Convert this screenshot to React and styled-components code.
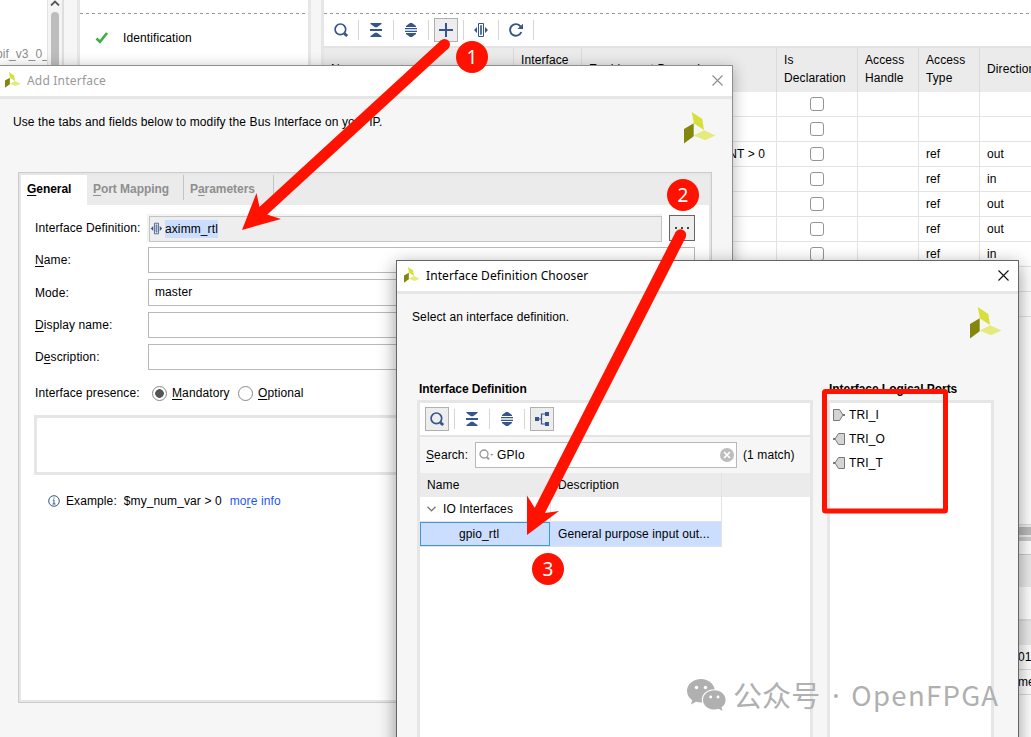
import React from "react";
import styled, { createGlobalStyle } from "styled-components";

const COLORS = {
  icon: "#36558c",
  panel: "#f6f6f6",
  header: "#ebebeb",
  line: "#e3e3e3",
  frame: "#e6e6e6",
  field: "#b9b9b9",
  selected: "#ccdeff",
  link: "#1c56f2",
  red: "#ff1200",
};

const ports = [
  { type: "", dir: "" },
  { type: "", dir: "" },
  { enable: "NT > 0", type: "ref", dir: "out" },
  { type: "ref", dir: "in" },
  { type: "ref", dir: "out" },
  { type: "ref", dir: "out" },
  { type: "ref", dir: "in" },
  { type: "ref", dir: "in" },
  { type: "ref", dir: "in" },
];

const SearchIcon = () => (
  <svg width="16" height="16" viewBox="0 0 16 16" fill="none" stroke={COLORS.icon}>
    <circle cx="7.4" cy="7.3" r="5.3" strokeWidth="1.7" />
    <path d="M11.4 11.6 14.2 14" strokeWidth="2.8" />
  </svg>
);

const CollapseIcon = () => (
  <svg width="16" height="16" viewBox="0 0 16 16" fill={COLORS.icon}>
    <path d="M2.5 1h11v1L9 5.200H7L2.500 2zM2 7h12v2H2zM2.500 15h11v-1L9 10.800H7L2.500 14z" />
  </svg>
);

const ExpandIcon = () => (
  <svg width="16" height="16" viewBox="0 0 16 16" fill={COLORS.icon}>
    <path d="M3 5V4l4-3h2l4 3v1zM2 6h12v1.300H2zM2 8.700h12V10H2zM3 11v1l4 3h2l4-3v-1z" />
  </svg>
);

const PlusIcon = () => (
  <svg width="16" height="16" viewBox="0 0 16 16" fill={COLORS.icon}>
    <path d="M7 1h2v6h6v2H9v6H7V9H1V7h6z" />
  </svg>
);

const BusIcon = ({ size = 16 }) => (
  <svg width={size} height={size} viewBox="0 0 16 16" fill="none" stroke={COLORS.icon}>
    <path d="M5.500 1.500h5v13h-5z" />
    <path d="M7.500 3.500h1v9h-1z" strokeWidth=".8" fill="#c4cede" />
    <path d="M4 5v6L1 8zM12 5v6l3-3z" stroke="none" fill={COLORS.icon} />
  </svg>
);

const RefreshIcon = () => (
  <svg width="16" height="16" viewBox="0 0 16 16" fill="none" stroke={COLORS.icon}>
    <path d="M12.600 4.600A5.800 5.800 0 1 0 13.300 10" strokeWidth="1.900" />
    <path d="M15 1.800V7H9.500z" stroke="none" fill={COLORS.icon} />
  </svg>
);

const TreeIcon = () => (
  <svg width="16" height="16" viewBox="0 0 16 16" fill={COLORS.icon}>
    <path d="M1 6h4v4H1zM11 1h4v4h-4zM11 11h4v4h-4z" />
    <path d="M5 8h2.500M11 3H7.500v10H11" fill="none" stroke={COLORS.icon} strokeWidth="1.200" />
  </svg>
);

const Logo = ({ size = 32 }) => (
  <svg width={size} height={size} viewBox="0 0 32 32">
    <path d="M7.700 0 18.300 7 20 18 10 11.600z" fill="#d6e03a" />
    <path d="M0 17 9.700 11.300v13L0 31.500z" fill="#84870c" />
    <path d="M9.700 23.500 20 18.200 31.500 23.400 21 28.200z" fill="#e4eb7c" />
  </svg>
);

const CloseIcon = ({ color }) => (
  <svg width="11" height="11" viewBox="0 0 11 11" stroke={color} strokeWidth="1.100">
    <path d="M.5.5l10 10M10.500.5l-10 10" />
  </svg>
);

const PortIcon = ({ out }) => (
  <svg width="12" height="12" viewBox="0 0 12 12">
    <g transform={out ? "matrix(-1 0 0 1 12 0)" : undefined}>
      <path d="M.5.5h6L10 6l-3.500 5.500h-6z" fill="#d4d4d4" stroke="#777" />
      <path d="M10 5h2v2h-2z" fill="#777" />
    </g>
  </svg>
);

const ToolButtons = ({ items, trailing }) =>
  items.map(({ Icon, active }, i) => (
    <React.Fragment key={i}>
      <ToolButton $active={active}>
        <Icon />
      </ToolButton>
      {(trailing || i < items.length - 1) && <Divider />}
    </React.Fragment>
  ));

const Workspace = () => (
  <Background>
    <TreePane>
      <TreeText>pif_v3_0_</TreeText>
      <ScrollTrack>
        <svg width="10" height="6" viewBox="0 0 10 6" fill="none" stroke="#555" strokeWidth="1.800">
          <path d="M1 5.500 5 1.500l4 4" />
        </svg>
        <ScrollThumb />
      </ScrollTrack>
    </TreePane>
    <StepsPane>
      <Dashed />
      <Step>
        <svg width="14" height="12" viewBox="0 0 14 12" fill="none" stroke="#3fae49" strokeWidth="2.600">
          <path d="M1.500 6.500 5 9.800 12 1" />
        </svg>
        Identification
      </Step>
    </StepsPane>
    <PortsPane>
      <Dashed />
      <Toolbar>
        <ToolButtons
          trailing
          items={[
            { Icon: SearchIcon },
            { Icon: CollapseIcon },
            { Icon: ExpandIcon },
            { Icon: PlusIcon, active: true },
            { Icon: BusIcon },
            { Icon: RefreshIcon },
          ]}
        />
      </Toolbar>
      <PortHeader>
        <HeadCell>Name</HeadCell>
        <HeadCell>Interface<br />Mode</HeadCell>
        <HeadCell>Enablement Dependency</HeadCell>
        <HeadCell>Is<br />Declaration</HeadCell>
        <HeadCell>Access<br />Handle</HeadCell>
        <HeadCell>Access<br />Type</HeadCell>
        <HeadCell>Direction</HeadCell>
      </PortHeader>
      {ports.map((port, i) => (
        <PortRow key={i}>
          <Cell />
          <Cell />
          <Cell $end>{port.enable}</Cell>
          <Cell $center><Checkbox /></Cell>
          <Cell />
          <Cell>{port.type}</Cell>
          <Cell>{port.dir}</Cell>
        </PortRow>
      ))}
      <Filler />
      <HScroll />
      <LowerGap />
      <LowerTabs />
      <LowerBar />
      <LowerHead />
      <LowerRow>01</LowerRow>
      <LowerRow>me</LowerRow>
    </PortsPane>
  </Background>
);

const AddInterface = () => (
  <AddDialog>
    <TitleBar $faded>
      <Logo size={16} />
      <Title $faded>Add Interface</Title>
      <CloseIcon color="#8c8c8c" />
    </TitleBar>
    <AddIntro>
      <span>Use the tabs and fields below to modify the Bus Interface on your IP.</span>
      <Logo />
    </AddIntro>
    <TabPanel>
      <Tabs>
        <Tab $active $width={66}><u>G</u>eneral</Tab>
        <Tab $width={97}><u>P</u>ort Mapping</Tab>
        <Tab $width={90}>P<u>a</u>rameters</Tab>
      </Tabs>
      <Form>
        <FormRow>
          <Label>Interface Definition:</Label>
          <ReadOnly>
            <BusIcon size={13} />
            <Highlight>aximm_rtl</Highlight>
          </ReadOnly>
          <Browse><i /><i /><i /></Browse>
        </FormRow>
        <FormRow><Label><u>N</u>ame:</Label><Field /></FormRow>
        <FormRow $height={27}><Label>Mode:</Label><Field>master</Field></FormRow>
        <FormRow><Label><u>D</u>isplay name:</Label><Field /></FormRow>
        <FormRow><Label>D<u>e</u>scription:</Label><Field /></FormRow>
        <PresenceRow>
          <Label>Interface presence:</Label>
          <Radio $checked /><RadioText $width={62}><u>M</u>andatory</RadioText>
          <Radio /><RadioText><u>O</u>ptional</RadioText>
        </PresenceRow>
      </Form>
      <Expression />
      <Hint>
        <svg width="12" height="12" viewBox="0 0 12 12" fill="none" stroke={COLORS.icon}>
          <circle cx="6" cy="6" r="5.300" />
          <path d="M4.800 5H6v4M4.500 9h3M5.500 3h1.200" />
        </svg>
        <span>Example:</span>
        <HintCode>$my_num_var &gt; 0</HintCode>
        <Link>mo<u>r</u>e info</Link>
      </Hint>
    </TabPanel>
  </AddDialog>
);

const Chooser = () => (
  <ChooserDialog>
    <TitleBar>
      <Logo size={16} />
      <Title>Interface Definition Chooser</Title>
      <CloseIcon color="#111" />
    </TitleBar>
    <ChooserIntro>
      <span>Select an interface definition.</span>
      <Logo />
    </ChooserIntro>
    <Columns>
      <Column $width={396}>
        <SectionTitle>Interface Definition</SectionTitle>
        <Frame>
          <ChooserToolbar>
            <ToolButtons
              items={[
                { Icon: SearchIcon, active: true },
                { Icon: CollapseIcon },
                { Icon: ExpandIcon },
                { Icon: TreeIcon, active: true },
              ]}
            />
          </ChooserToolbar>
          <SearchRow>
            <SearchLabel><u>S</u>earch:</SearchLabel>
            <SearchField>
              <svg width="15" height="12" viewBox="0 0 15 12" fill="none" stroke="#999">
                <circle cx="5" cy="5" r="4" strokeWidth="1.300" />
                <path d="M7.800 8.200 10 10.300" strokeWidth="2" />
                <path d="M11 5h3.600l-1.800 1.800z" fill="#999" stroke="none" />
              </svg>
              <span>GPIo</span>
              <svg width="14" height="14" viewBox="0 0 14 14">
                <circle cx="7" cy="7" r="7" fill="#bdbdbd" />
                <path d="M4 4l6 6M10 4l-6 6" stroke="#fff" strokeWidth="1.700" />
              </svg>
            </SearchField>
            (1 match)
          </SearchRow>
          <DefHeader>
            <DefCell>Name</DefCell>
            <DefCell>Description</DefCell>
          </DefHeader>
          <DefRow>
            <DefCell>
              <svg width="9" height="6" viewBox="0 0 9 6" fill="none" stroke="#777" strokeWidth="1.300">
                <path d="M.5.8l4 4 4-4" />
              </svg>
              <GroupName>IO Interfaces</GroupName>
            </DefCell>
            <DefCell />
          </DefRow>
          <DefRow $selected>
            <FocusCell>gpio_rtl</FocusCell>
            <DefCell>General purpose input out...</DefCell>
          </DefRow>
        </Frame>
      </Column>
      <Column $width={167}>
        <SectionTitle>Interface Logical Ports</SectionTitle>
        <Frame>
          <LogicalPort><PortIcon />TRI_I</LogicalPort>
          <LogicalPort><PortIcon out />TRI_O</LogicalPort>
          <LogicalPort><PortIcon out />TRI_T</LogicalPort>
        </Frame>
      </Column>
    </Columns>
  </ChooserDialog>
);

const Annotations = () => (
  <>
    <Marks viewBox="0 0 1031 737" fill={COLORS.red}>
      <circle cx="444.500" cy="44.500" r="5.500" />
      <path d="M444.500 44.500 262 212" stroke={COLORS.red} strokeWidth="11" />
      <path d="M242 230 256.500 193 259.500 207 267 214.500 281 219z" />
      <circle cx="680.500" cy="235" r="5.700" />
      <path d="M680.500 235 538 514" stroke={COLORS.red} strokeWidth="11.500" />
      <path d="M527 535V495.500L534.500 507.500 545 513 559 511z" />
      <rect x="824.500" y="391.500" width="121" height="119.500" rx="1" fill="none" stroke={COLORS.red} strokeWidth="5" />
    </Marks>
    <Badge $x={456} $y={41}>1</Badge>
    <Badge $x={667} $y={179}>2</Badge>
    <Badge $x={532} $y={553}>3</Badge>
  </>
);

const Watermark = () => (
  <WatermarkBox>
    <svg width="39" height="33" viewBox="0 0 39 33" fill="#b0b0b0">
      <path d="M14 0C6.200 0 0 5.300 0 12c0 3.800 2 7 5.200 9.200L4 25.500l5-2.700c1.600.5 3.300.8 5 .8h1.200c-.3-1-.4-1.900-.4-2.800 0-6.200 5.800-10.600 12.200-10.600h.8C26.200 4.200 20.700 0 14 0z" />
      <path d="M38.600 20.900c0-5.400-5.200-9.600-11.300-9.600S16 15.500 16 20.900s5.200 9.600 11.300 9.600c1.500 0 2.900-.2 4.200-.7l4 2.200-1-3.700c2.500-1.800 4.100-4.400 4.100-7.400z" />
      <g fill="#fff">
        <circle cx="9.500" cy="8.500" r="1.700" />
        <circle cx="18.500" cy="8.500" r="1.700" />
        <circle cx="23.700" cy="18" r="1.400" />
        <circle cx="31" cy="18" r="1.400" />
      </g>
    </svg>
    <Account>公众号</Account>
    <Dot>·</Dot>
    <Brand>OpenFPGA</Brand>
  </WatermarkBox>
);

const App = () => (
  <Screen>
    <GlobalStyle />
    <Workspace />
    <AddInterface />
    <Chooser />
    <Annotations />
    <Watermark />
  </Screen>
);

export default App;

const GlobalStyle = createGlobalStyle`
  * {
    box-sizing: border-box;
  }

  body {
    margin: 0;
    overflow: hidden;
    font-family: "Liberation Sans", Arial, sans-serif;
    font-size: 12px;
    letter-spacing: 0.1px;
    color: #000;
  }

  svg {
    display: block;
    flex-shrink: 0;
  }

  u {
    text-underline-offset: 2px;
    text-decoration-skip-ink: none;
  }
`;

const Screen = styled.div`
  position: relative;
  width: 1031px;
  height: 737px;
  overflow: hidden;
  white-space: nowrap;
`;

const Background = styled.div`
  display: flex;
  height: 100%;
  background: ${COLORS.panel};
`;

const TreePane = styled.div`
  display: flex;
  flex-shrink: 0;
  width: 64px;
  margin-right: 13px;
  background: #fff;
  border-right: 2px solid #dedede;
`;

const TreeText = styled.div`
  width: 47px;
  padding: 47px 0 0;
  overflow: hidden;
  color: #8c8c8c;
  text-indent: -4px;
`;

const ScrollTrack = styled.div`
  display: flex;
  flex-direction: column;
  align-items: center;
  width: 15px;
  border-left: 1px solid #e3e3e3;
  background: #f4f4f4;
`;

const ScrollThumb = styled.div`
  width: 8px;
  height: 90px;
  margin-top: 6px;
  border-radius: 4px;
  background: #bdbdbd;
`;

const StepsPane = styled.div`
  flex-shrink: 0;
  width: 234px;
  margin-right: 10px;
  border: solid ${COLORS.frame};
  border-width: 0 3px;
  background: #fff;
`;

const Dashed = styled.div`
  height: 14px;
  flex-shrink: 0;
  background: repeating-linear-gradient(90deg, #999 0 3px, transparent 3px 6px) bottom / 100% 1px no-repeat;
`;

const Step = styled.div`
  display: flex;
  align-items: center;
  gap: 14px;
  height: 47px;
  padding-left: 15px;
`;

const PortsPane = styled.div`
  display: flex;
  flex-direction: column;
  flex: 1;
  min-width: 0;
  overflow: hidden;
  border-left: 3px solid ${COLORS.frame};
  background: #fff;
`;

const Toolbar = styled.div`
  display: flex;
  align-items: center;
  height: 32px;
  flex-shrink: 0;
  padding-left: 5px;
`;

const ToolButton = styled.div`
  display: flex;
  align-items: center;
  justify-content: center;
  width: 24px;
  height: 24px;
  border: 1px solid ${(p) => (p.$active ? "#b0b0b0" : "transparent")};
  background: ${(p) => (p.$active ? "#ededed" : "transparent")};
`;

const Divider = styled.div`
  width: 1px;
  height: 20px;
  margin: 0 5px;
  background: #d6d6d6;
`;

const PortHeader = styled.div`
  display: grid;
  grid-template-columns: 190px 68px 195px 81px 61px 61px 80px;
  height: 46px;
  flex-shrink: 0;
  border-top: 2px solid ${COLORS.line};
  background: ${COLORS.header};
`;

const HeadCell = styled.div`
  display: flex;
  align-items: center;
  padding: 0 0 2px 7px;
  border-right: 1px solid #dadada;
  line-height: 18px;
`;

const PortRow = styled.div`
  display: grid;
  grid-template-columns: 190px 68px 195px 81px 61px 61px 80px;
  height: 25px;
  flex-shrink: 0;
`;

const Cell = styled.div`
  display: flex;
  align-items: center;
  justify-content: ${(p) => (p.$center ? "center" : p.$end ? "flex-end" : "flex-start")};
  padding: ${(p) => (p.$center ? "0" : p.$end ? "0 11px" : "0 7px")};
  border: solid ${COLORS.line};
  border-width: 0 1px 1px 0;
`;

const Checkbox = styled.div`
  width: 14px;
  height: 14px;
  border: 1.500px solid #949494;
  border-radius: 3px;
  background: #fff;
`;

const Filler = styled.div`
  height: 208px;
  border-bottom: 1px solid #ddd;
  flex-shrink: 0;
`;

const HScroll = styled.div`
  height: 12px;
  flex-shrink: 0;
  border: solid #eee;
  border-width: 2px 0;
  background: #bbb;
`;

const LowerGap = styled.div`
  height: 18px;
  flex-shrink: 0;
  border: solid #ccc;
  border-width: 4px 0 1px;
`;

const LowerTabs = styled.div`
  height: 32px;
  flex-shrink: 0;
  background: ${COLORS.header};
`;

const LowerBar = styled.div`
  height: 32px;
  flex-shrink: 0;
`;

const LowerHead = styled.div`
  height: 26px;
  flex-shrink: 0;
  border-top: 2px solid #e0e0e0;
  background: ${COLORS.header};
`;

const LowerRow = styled.div`
  height: 25px;
  padding-left: 694px;
  border-bottom: 1px solid #dcdcdc;
  line-height: 24px;
`;

const AddDialog = styled.div`
  position: absolute;
  left: -1px;
  top: 65px;
  width: 734px;
  height: 720px;
  border: 1px solid #8e8e8e;
  background: ${COLORS.panel};
  box-shadow: 0 3px 14px rgba(0, 0, 0, 0.3);
`;

const TitleBar = styled.div`
  display: flex;
  align-items: center;
  height: 33px;
  padding: ${(p) => (p.$faded ? "0 9px 2px 5px" : "0 9px 2px 7px")};
  border-bottom: 3px solid ${COLORS.frame};
  background: #fff;
`;

const Title = styled.div`
  flex: 1;
  padding-left: 6px;
  color: ${(p) => (p.$faded ? "#999" : "#000")};
  font-family: "Noto Sans", sans-serif;
  font-size: 12px;
  letter-spacing: ${(p) => (p.$faded ? "0.2px" : "0.1px")};
`;

const AddIntro = styled.div`
  display: flex;
  justify-content: space-between;
  height: 73px;
  padding: 13px 16px 0 13px;

  span {
    line-height: 20px;
  }
`;

const TabPanel = styled.div`
  width: 694px;
  height: 531px;
  margin-left: 18px;
  border: 1px solid #ccc;
  background: #fff;
  box-shadow: inset 0 0 0 2px ${COLORS.frame};
  padding: 2px;
`;

const Tabs = styled.div`
  display: flex;
  height: 30px;
  background: ${COLORS.header};
`;

const Tab = styled.div`
  width: ${(p) => p.$width}px;
  height: ${(p) => (p.$active ? 30 : 25)}px;
  padding-left: 6px;
  border-right: ${(p) => (p.$active ? "0" : "1px solid #c4c4c4")};
  background: ${(p) => (p.$active ? "#fff" : "transparent")};
  color: ${(p) => (p.$active ? "#000" : "#8f8f8f")};
  font-weight: bold;
  line-height: 28px;
  letter-spacing: -0.05px;
`;

const Form = styled.div`
  display: flex;
  flex-direction: column;
  gap: 6px;
  padding: 10px 14px 0;
`;

const FormRow = styled.div`
  display: flex;
  height: ${(p) => p.$height || 26}px;
  align-items: center;
`;

const Label = styled.div`
  width: 113px;
  flex-shrink: 0;
  line-height: 14px;
`;

const Field = styled.div`
  display: flex;
  align-items: center;
  flex: 1;
  height: 100%;
  padding: 0 0 1px 6px;
  border: 1px solid ${COLORS.field};
  background: #fff;
`;

const ReadOnly = styled.div`
  display: flex;
  align-items: center;
  gap: 2px;
  width: 513px;
  height: 26px;
  margin: 2px 7px 0 1px;
  padding-bottom: 1px;
  border: 1px solid #c4c4c4;
  background: #eee;
  box-shadow: -1px -1px 0 1px #f2f2f2;
`;

const Highlight = styled.span`
  height: 18px;
  background: ${COLORS.selected};
  line-height: 18px;
`;

const Browse = styled.div`
  display: flex;
  align-items: center;
  justify-content: center;
  gap: 4px;
  width: 26px;
  height: 26px;
  border: 1px solid #666;
  background: #ededed;

  i {
    width: 2px;
    height: 2px;
    background: #444;
  }
`;

const PresenceRow = styled.div`
  display: flex;
  align-items: center;
  height: 16px;
  margin-top: 9px;
`;

const Radio = styled.div`
  width: 15px;
  height: 15px;
  margin-left: 4px;
  border: 1px solid #888;
  border-radius: 50%;
  background: ${(p) => (p.$checked ? "radial-gradient(circle, #555 0 4px, #fff 4.600px)" : "#fff")};
`;

const RadioText = styled.div`
  width: ${(p) => (p.$width ? `${p.$width}px` : "auto")};
  margin-left: 5px;
`;

const Expression = styled.div`
  width: 662px;
  height: 60px;
  margin: 14px 0 0 13px;
  border: 3px solid ${COLORS.frame};
`;

const Hint = styled.div`
  display: flex;
  align-items: center;
  gap: 6px;
  height: 16px;
  margin: 18px 0 0 27px;
`;

const HintCode = styled.span`
  margin-left: 1px;
`;

const Link = styled.span`
  margin-left: 2px;
  color: ${COLORS.link};
`;

const ChooserDialog = styled.div`
  position: absolute;
  left: 396px;
  top: 260px;
  width: 623px;
  height: 540px;
  border: 1px solid #666;
  background: ${COLORS.panel};
  box-shadow: 0 5px 17px rgba(0, 0, 0, 0.42);
`;

const ChooserIntro = styled.div`
  display: flex;
  justify-content: space-between;
  height: 84px;
  padding: 13px 16px 0 15px;

  span {
    line-height: 20px;
  }
`;

const Columns = styled.div`
  display: flex;
  gap: 14px;
  padding-left: 20px;
`;

const Column = styled.div`
  width: ${(p) => p.$width}px;
`;

const SectionTitle = styled.div`
  height: 22px;
  padding-left: 2px;
  font-weight: bold;
  line-height: 22px;
  letter-spacing: -0.05px;
`;

const Frame = styled.div`
  height: 400px;
  border: 3px solid ${COLORS.frame};
  background: #fff;
`;

const ChooserToolbar = styled(Toolbar)`
  height: 34px;
  border-bottom: 2px solid ${COLORS.line};
`;

const SearchRow = styled.div`
  display: flex;
  align-items: center;
  height: 36px;
  padding-left: 6px;
  background: ${COLORS.panel};
`;

const SearchLabel = styled.div`
  width: 49px;
`;

const SearchField = styled.div`
  display: flex;
  align-items: center;
  width: 262px;
  height: 26px;
  margin-right: 6px;
  padding: 0 2px 0 3px;
  border: 1px solid ${COLORS.field};
  background: #fff;

  span {
    flex: 1;
    padding-left: 3px;
  }
`;

const DefHeader = styled.div`
  display: grid;
  grid-template-columns: 131px 171px;
  height: 24px;
  background: ${COLORS.header};
`;

const DefRow = styled.div`
  display: grid;
  grid-template-columns: 131px 171px;
  width: 302px;
  height: 25px;
  border-bottom: 1px solid ${COLORS.line};
  background: ${(p) => (p.$selected ? COLORS.selected : "#fff")};
`;

const DefCell = styled.div`
  display: flex;
  align-items: center;
  padding-left: 7px;
  border-right: 1px solid ${COLORS.line};
`;

const FocusCell = styled.div`
  display: flex;
  align-items: center;
  width: 130px;
  padding-left: 38px;
  border: 1px solid #3f97d6;
`;

const GroupName = styled.span`
  padding-left: 7px;
`;

const LogicalPort = styled.div`
  display: flex;
  align-items: center;
  gap: 4px;
  height: 24px;
  padding-left: 3px;
`;

const Marks = styled.svg`
  position: absolute;
  inset: 0;
  width: 1031px;
  height: 737px;
`;

const Badge = styled.div`
  position: absolute;
  left: ${(p) => p.$x}px;
  top: ${(p) => p.$y}px;
  width: 32px;
  height: 32px;
  border-radius: 50%;
  background: ${COLORS.red};
  color: #fff;
  font-family: "Noto Sans", sans-serif;
  font-size: 19px;
  line-height: 33px;
  text-align: center;
`;

const WatermarkBox = styled.div`
  position: absolute;
  left: 687px;
  top: 674px;
  display: flex;
  align-items: center;
  height: 40px;
  color: #b0b0b0;
  font-family: "Noto Sans CJK SC", sans-serif;
  font-size: 29px;

  svg {
    margin-top: 2px;
  }
`;

const Account = styled.span`
  padding-left: 7px;
`;

const Dot = styled.span`
  width: 31px;
  font-family: "Noto Sans", sans-serif;
  text-align: center;
`;

const Brand = styled.span`
  font-size: 27.500px;
  letter-spacing: 1.300px;
`;
